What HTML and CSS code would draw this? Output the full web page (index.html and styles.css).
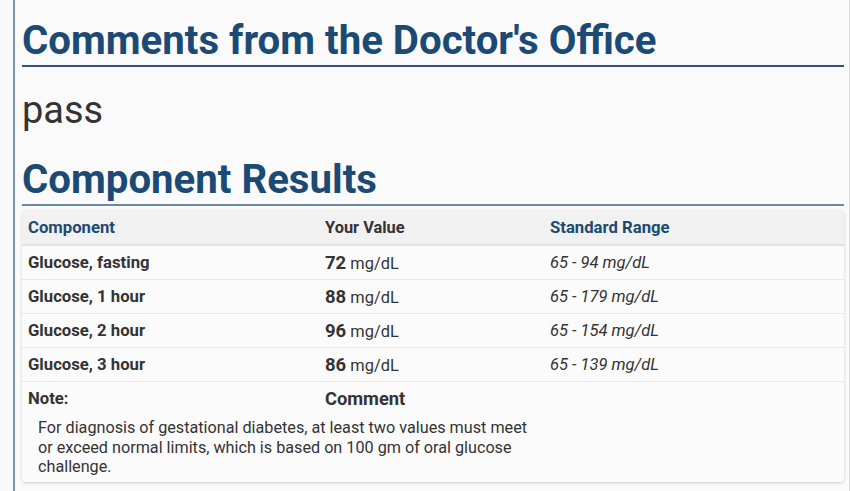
FILE: index.html
```html
<!DOCTYPE html>
<html>
<head>
<meta charset="utf-8">
<link rel="stylesheet" href="styles.css">
</head>
<body>
<div class="frame">
  <div class="content">
    <h2 class="title">Comments from the Doctor's Office</h2>
    <p class="comment">pass</p>
    <h2 class="title second">Component Results</h2>
    <div class="card">
      <div class="row head">
        <div class="c1">Component</div>
        <div class="c2">Your Value</div>
        <div class="c3">Standard Range</div>
      </div>
      <div class="row">
        <div class="c1 lbl">Glucose, fasting</div>
        <div class="c2"><b class="num">72</b> mg/dL</div>
        <div class="c3 rng">65 - 94 mg/dL</div>
      </div>
      <div class="row">
        <div class="c1 lbl">Glucose, 1 hour</div>
        <div class="c2"><b class="num">88</b> mg/dL</div>
        <div class="c3 rng">65 - 179 mg/dL</div>
      </div>
      <div class="row">
        <div class="c1 lbl">Glucose, 2 hour</div>
        <div class="c2"><b class="num">96</b> mg/dL</div>
        <div class="c3 rng">65 - 154 mg/dL</div>
      </div>
      <div class="row">
        <div class="c1 lbl">Glucose, 3 hour</div>
        <div class="c2"><b class="num">86</b> mg/dL</div>
        <div class="c3 rng">65 - 139 mg/dL</div>
      </div>
      <div class="note">
        <div class="note-head">
          <div class="c1 lbl">Note:</div>
          <div class="c2 cm">Comment</div>
        </div>
        <p class="note-text">For diagnosis of gestational diabetes, at least two values must meet<br>or exceed normal limits, which is based on 100 gm of oral glucose<br>challenge.</p>
      </div>
    </div>
  </div>
</div>
</body>
</html>
```
FILE: styles.css
```css
html, body {
  margin: 0;
  padding: 0;
  height: 100%;
}
body {
  background: #f8f8f8;
  font-family: Roboto, "Liberation Sans", sans-serif;
  color: #333;
  overflow: hidden;
}
.frame {
  margin-left: 13px;
  width: 834px;
  height: 100%;
  border-left: 2px solid #7d93a6;
  border-right: 1px solid #d8d8d8;
  background: #fafafa;
  box-sizing: content-box;
}
.content {
  padding: 17px 5px 0 7px;
}
.title {
  margin: 0;
  font-size: 40.2px;
  line-height: 48px;
  font-weight: 700;
  color: #1b4a75;
  border-bottom: 2px solid #2f5578;
  padding-bottom: 0;
}
.comment {
  margin: 0;
  padding: 21px 0 0 0;
  height: 68px;
  font-size: 38px;
  line-height: 44px;
  color: #333;
}
.title.second {
  border-bottom-color: #6a89a6;
}
.card {
  margin-top: 4px;
  background: #fbfbfb;
  border-radius: 4px;
  box-shadow: 0 1px 3px rgba(0,0,0,0.18);
}
.row, .note-head {
  display: flex;
  align-items: center;
  height: 33px;
  border-top: 1px solid #e6e6e6;
}
.row.head {
  height: 34px;
  border-top: none;
  background: #f1f1f1;
  border-radius: 4px 4px 0 0;
  border-bottom: 2px solid #e3e3e3;
  font-weight: 700;
  color: #1d4a74;
  font-size: 16.7px;
}
.row.head + .row { border-top: none; }
.c1 { width: 303px; padding-left: 6px; box-sizing: border-box; }
.c2 { width: 225px; }
.c3 { flex: 1; }
.lbl { font-weight: 700; font-size: 16.7px; color: #333; }
.c2 { font-size: 16.4px; color: #333; }
.num { font-size: 18.5px; font-weight: 700; }
.rng { font-style: italic; font-size: 16.5px; color: #333; }
.note { border-top: 1px solid #e6e6e6; padding-bottom: 5px; }
.note-head { border-top: none; }
.cm { font-weight: 700; font-size: 18.3px; }
.note-text {
  margin: 0;
  padding: 3px 0 0 16px;
  font-size: 16.2px;
  line-height: 19.5px;
  color: #333;
}
```
